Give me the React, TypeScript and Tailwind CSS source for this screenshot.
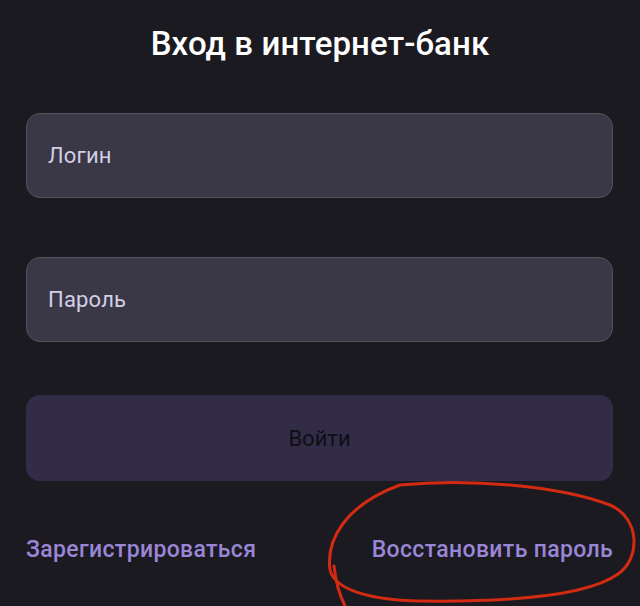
import React from "react";

export default function App() {
  return (
    <div
      className="relative w-[640px] h-[606px] overflow-hidden bg-[#1b1a21] px-[26px]"
      style={{ fontFamily: "Roboto, 'Noto Sans', sans-serif" }}
    >
      <h1 className="pt-[22px] text-center text-[33px] leading-[44px] font-medium tracking-[0.1px] text-white">
        Вход в интернет-банк
      </h1>
      <div className="mt-[47px] flex flex-col">
        <div className="h-[85px] w-[587px] rounded-[14px] border border-[#55525f] bg-[#3a3747] flex items-center pl-[21px] text-[22px] tracking-[0.2px] text-[#d3cfe4]">
          Логин
        </div>
        <div className="mt-[59px] h-[85px] w-[587px] rounded-[14px] border border-[#55525f] bg-[#3a3747] flex items-center pl-[21px] text-[22px] tracking-[0.2px] text-[#d3cfe4]">
          Пароль
        </div>
        <div className="mt-[53px] h-[86px] w-[587px] rounded-[14px] bg-[#322c47] flex items-center justify-center text-[22px] text-[#0f0e15]">
          Войти
        </div>
        <div className="mt-[52px] flex items-center justify-between w-[587px] text-[23px] tracking-[0.35px] font-medium text-[#9a86d6]">
          <span>Зарегистрироваться</span>
          <span>Восстановить пароль</span>
        </div>
      </div>
      <svg
        className="absolute left-0 top-0 pointer-events-none"
        width="640"
        height="606"
        viewBox="0 0 640 606"
        fill="none"
      >
        <path
          d="M400 485 C470 478 560 486 610 505 C640 518 641 558 618 574 C585 598 500 602 420 601 C370 600 335 590 330 570 C326 540 345 505 400 485 Z"
          stroke="#d32a12"
          strokeWidth="3"
          strokeLinecap="round"
        />
        <path
          d="M334 566 C336 585 340 596 345 606"
          stroke="#d32a12"
          strokeWidth="3"
          strokeLinecap="round"
        />
      </svg>
    </div>
  );
}
